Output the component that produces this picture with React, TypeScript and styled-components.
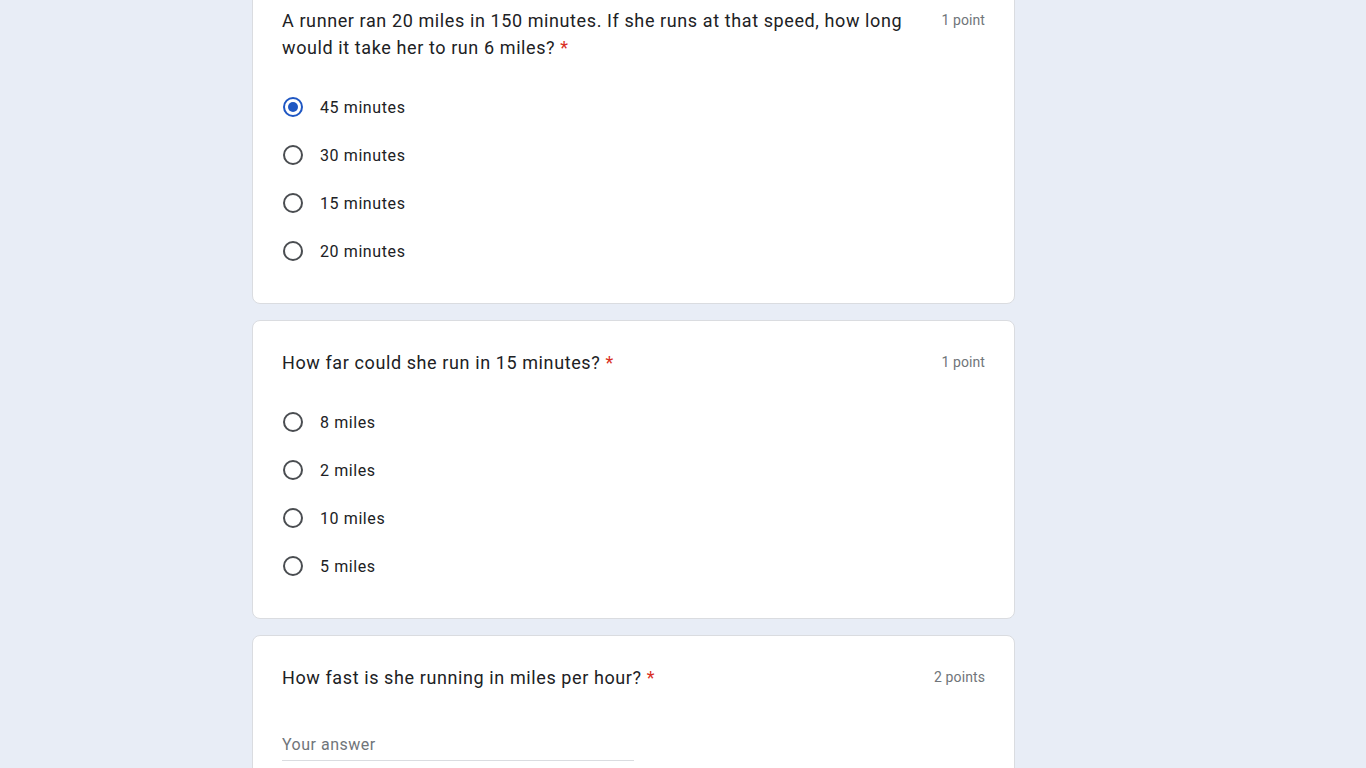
import React from 'react'
import styled, { createGlobalStyle } from 'styled-components'

const GlobalStyle = createGlobalStyle`
  html, body {
    margin: 0;
    padding: 0;
    background: #e8edf6;
    font-family: Roboto, "Liberation Sans", Arial, sans-serif;
    color: #202124;
  }
  * { box-sizing: border-box; }
`

type Question = {
  title: string
  points: string
  kind: 'choice' | 'text'
  options?: string[]
  selected?: number
}

const questions: Question[] = [
  {
    title: 'A runner ran 20 miles in 150 minutes. If she runs at that speed, how long would it take her to run 6 miles?',
    points: '1 point',
    kind: 'choice',
    options: ['45 minutes', '30 minutes', '15 minutes', '20 minutes'],
    selected: 0,
  },
  {
    title: 'How far could she run in 15 minutes?',
    points: '1 point',
    kind: 'choice',
    options: ['8 miles', '2 miles', '10 miles', '5 miles'],
  },
  {
    title: 'How fast is she running in miles per hour?',
    points: '2 points',
    kind: 'text',
  },
]

export default function App() {
  return (
    <>
      <GlobalStyle />
      <Page>
        {questions.map((q, i) => (
          <Card key={i}>
            <Header>
              <Title>
                {q.title} <Required>*</Required>
              </Title>
              <Points>{q.points}</Points>
            </Header>
            {q.kind === 'choice' ? (
              <Options>
                {q.options!.map((opt, j) => (
                  <Option key={opt}>
                    <Radio $checked={q.selected === j} />
                    <OptionLabel>{opt}</OptionLabel>
                  </Option>
                ))}
              </Options>
            ) : (
              <AnswerField>Your answer</AnswerField>
            )}
          </Card>
        ))}
      </Page>
    </>
  )
}

const Page = styled.main`
  display: flex;
  flex-direction: column;
  gap: 16px;
  padding-left: 252px;
  margin-top: -22px;
`

const Card = styled.section`
  width: 763px;
  background: #fff;
  border: 1px solid #dadce0;
  border-radius: 8px;
  padding: 28px 29px;
`

const Header = styled.div`
  display: flex;
  align-items: flex-start;
  gap: 24px;
`

const Title = styled.div`
  flex: 1;
  font-size: 18px;
  line-height: 27px;
  letter-spacing: 0.6px;
  color: #202124;
`

const Required = styled.span`
  color: #d93025;
`

const Points = styled.div`
  font-size: 14px;
  line-height: 27px;
  color: #70757a;
  letter-spacing: 0.1px;
  white-space: nowrap;
`

const Options = styled.div`
  display: flex;
  flex-direction: column;
  margin-top: 22px;
`

const Option = styled.div`
  display: flex;
  align-items: center;
  height: 48px;
  padding-left: 1px;
`

const Radio = styled.span<{ $checked?: boolean }>`
  position: relative;
  width: 20px;
  height: 20px;
  border-radius: 50%;
  border: 2px solid ${(p) => (p.$checked ? '#1f57c3' : '#4a4d51')};
  flex-shrink: 0;
  margin-right: 17px;
  &::after {
    content: '';
    position: absolute;
    left: 3px;
    top: 3px;
    width: 10px;
    height: 10px;
    border-radius: 50%;
    background: #1f57c3;
    display: ${(p) => (p.$checked ? 'block' : 'none')};
  }
`

const OptionLabel = styled.span`
  font-size: 16px;
  letter-spacing: 0.6px;
  color: #202124;
`

const AnswerField = styled.div`
  width: 50%;
  margin-top: 42px;
  padding-bottom: 3px;
  font-size: 16px;
  line-height: 24px;
  color: #70757a;
  letter-spacing: 0.5px;
  border-bottom: 1px solid #dadce0;
`
